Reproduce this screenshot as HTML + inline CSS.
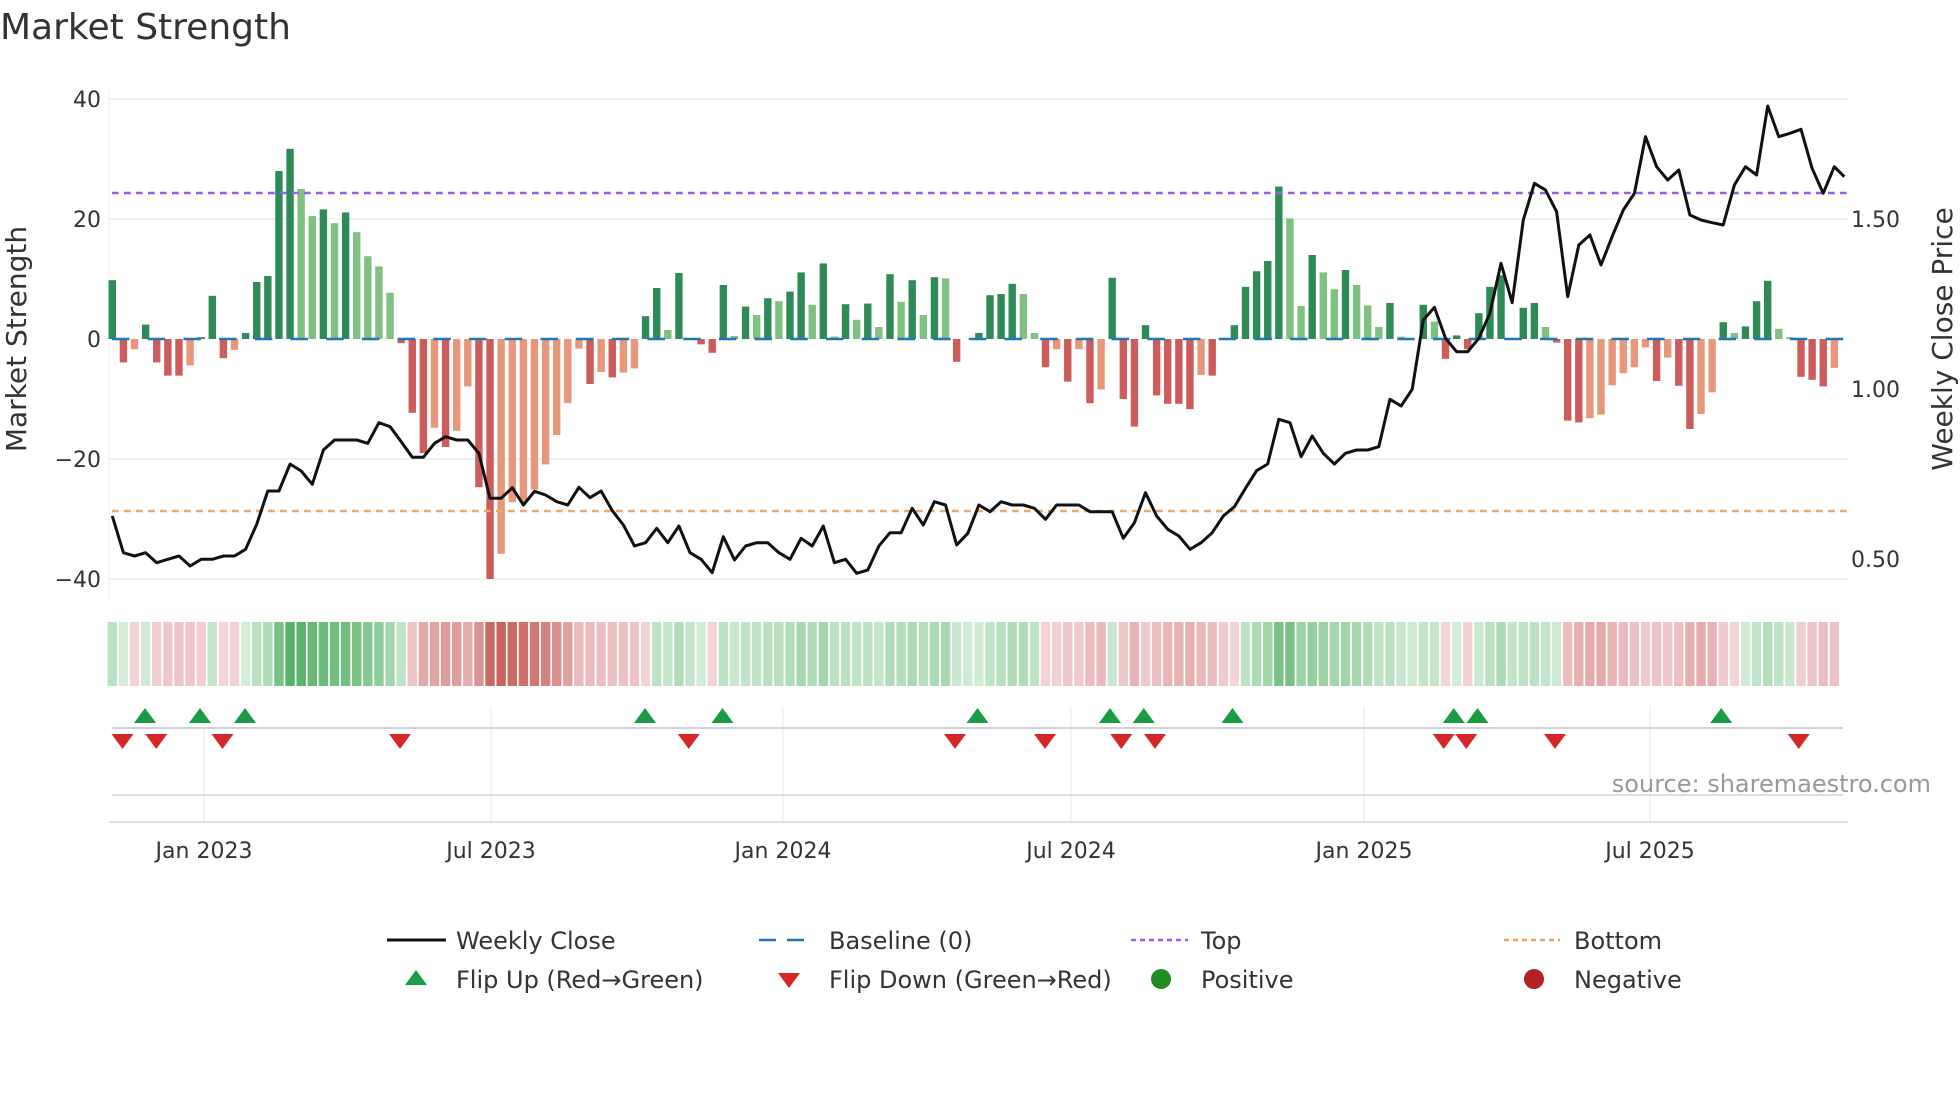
<!DOCTYPE html>
<html><head><meta charset="utf-8"><style>
html,body{margin:0;padding:0;background:#fff;width:1960px;height:1102px;overflow:hidden}
svg text{font-family:"DejaVu Sans","Liberation Sans",sans-serif;fill:#333}
</style></head><body>
<svg id="s" width="1960" height="1102" viewBox="0 0 1960 1102" xmlns="http://www.w3.org/2000/svg">
<text x="0" y="39" font-size="36" fill="#333">Market Strength</text>
<g id="grid"></g>
<g id="bars"></g>
<g id="strip"></g>
<g id="marks"></g>
<g font-size="22" text-anchor="end">
<text x="101" y="107">40</text><text x="101" y="227">20</text><text x="101" y="347">0</text>
<text x="101" y="467">−20</text><text x="101" y="587">−40</text>
</g>
<g font-size="22">
<text x="1851" y="227">1.50</text><text x="1851" y="397">1.00</text><text x="1851" y="567">0.50</text>
</g>
<text font-size="28" text-anchor="middle" transform="translate(26,339) rotate(-90)">Market Strength</text>
<text font-size="28" text-anchor="middle" transform="translate(1952,339) rotate(-90)">Weekly Close Price</text>
<g font-size="22" text-anchor="middle">
<text x="204" y="858">Jan 2023</text><text x="491" y="858">Jul 2023</text><text x="783" y="858">Jan 2024</text>
<text x="1071" y="858">Jul 2024</text><text x="1364" y="858">Jan 2025</text><text x="1650" y="858">Jul 2025</text>
</g>
<text x="1931" y="792" font-size="24" text-anchor="end" style="fill:#999">source: sharemaestro.com</text>
<g font-size="24">
<line x1="387" y1="940" x2="446" y2="940" stroke="#111" stroke-width="3"/>
<text x="456" y="949">Weekly Close</text>
<line x1="759" y1="940" x2="815" y2="940" stroke="#1f77b4" stroke-width="2.5" stroke-dasharray="17,11"/>
<text x="829" y="949">Baseline (0)</text>
<line x1="1131" y1="940" x2="1188" y2="940" stroke="#9b5de5" stroke-width="2.5" stroke-dasharray="5,4"/>
<text x="1201" y="949">Top</text>
<line x1="1504" y1="940" x2="1560" y2="940" stroke="#f0a060" stroke-width="2.5" stroke-dasharray="5,4"/>
<text x="1574" y="949">Bottom</text>
<polygon points="405,985 427,985 416,970" fill="#1a9c45"/>
<text x="456" y="988">Flip Up (Red→Green)</text>
<polygon points="778,973 800,973 789,988" fill="#d62728"/>
<text x="829" y="988">Flip Down (Green→Red)</text>
<circle cx="1161" cy="979" r="10" fill="#228b22"/>
<text x="1201" y="988">Positive</text>
<circle cx="1534" cy="979" r="10" fill="#b22222"/>
<text x="1574" y="988">Negative</text>
</g>
</svg>
<script>
var NS="http://www.w3.org/2000/svg";
function el(p,t,a){var e=document.createElementNS(NS,t);for(var k in a)e.setAttribute(k,a[k]);document.getElementById(p).appendChild(e);return e;}
var V=[9.8,-3.9,-1.7,2.4,-3.9,-6.1,-6.1,-4.4,0.3,7.2,-3.2,-1.8,1,9.5,10.5,28,31.7,25,20.5,21.6,19.3,21.1,17.8,13.8,12.1,7.7,-0.7,-12.3,-19,-14.8,-18,-15.3,-7.9,-24.7,-40,-35.8,-27.2,-27.2,-25.1,-20.9,-16,-10.7,-1.6,-7.5,-5.5,-6.4,-5.6,-4.9,3.8,8.5,1.5,11,0,-0.9,-2.3,9,0.5,5.4,4,6.8,6.3,7.9,11.1,5.7,12.6,0.4,5.8,3.2,5.9,2,10.8,6.2,9.8,4,10.3,10.1,-3.8,0,1,7.3,7.5,9.2,7.5,1,-4.7,-1.7,-7.1,-1.7,-10.7,-8.4,10.2,-10,-14.6,2.3,-9.4,-10.8,-10.8,-11.7,-6,-6.1,0,2.3,8.7,11.3,13,25.4,20.1,5.5,14,11.1,8.3,11.5,9,5.6,2,6,0.4,0,5.7,2.9,-3.3,0.6,-1.7,4.3,8.7,10.6,0.2,5.2,6,2,-0.6,-13.6,-13.9,-13.2,-12.6,-7.7,-5.7,-4.7,-1.4,-7,-3.1,-7.8,-15,-12.5,-8.9,2.8,1,2.1,6.3,9.7,1.7,0.3,-6.3,-6.8,-7.9,-4.8];
var P=[1278,1388,1398,1388,1418,1408,1398,1428,1408,1408,1398,1398,1378,1303,1203,1203,1122,1143,1183,1080,1050,1050,1050,1060,998,1010,1055,1102,1102,1060,1040,1050,1050,1090,1225,1225,1193,1245,1204,1215,1235,
1245,1192,1223,1203,1262,1305,1368,1358,1315,1358,1308,1388,1408,1448,1340,1410,1368,1358,1358,1388,1408,1345,1368,1308,1418,1408,1450,1440,1368,1328,1328,1255,1305,1235,1245,1365,1330,1245,1265,1235,1245,
1245,1255,1288,1245,1245,1245,1265,1265,1265,1345,1298,1208,1278,1318,1338,1378,1358,1328,1278,1250,1195,1142,1122,988,998,1100,1038,1090,1122,1090,1080,1080,1070,928,948,898,690,652,745,785,
785,745,670,520,638,390,280,300,365,620,465,435,525,440,360,310,140,230,270,240,375,390,398,405,285,230,255,48,140,130,118,235,310,230];
var LT={2:1,7:1,11:1,17:1,18:1,20:1,22:1,23:1,24:1,25:1,29:1,31:1,32:1,35:1,36:1,37:1,38:1,39:1,40:1,41:1,42:1,44:1,46:1,47:1,50:1,56:1,58:1,60:1,63:1,65:1,67:1,69:1,71:1,73:1,75:1,82:1,83:1,85:1,87:1,89:1,98:1,106:1,107:1,109:1,110:1,112:1,113:1,114:1,116:1,119:1,126:1,129:1,133:1,134:1,135:1,136:1,137:1,138:1,140:1,143:1,144:1,146:1,150:1,151:1,155:1};
function X(i){return 112.3+i*11.11;}
function Y(v){return 339-v*6.0;}
[99,219,459,579].forEach(function(y){el("grid","line",{x1:109,x2:1848,y1:y,y2:y,stroke:"#eceff3","stroke-width":1.5});});
el("grid","line",{x1:109,x2:109,y1:90,y2:600,stroke:"#eef0f3","stroke-width":1});
for(var i=0;i<V.length;i++){var v=V[i];if(v===0)continue;var lt=LT[i];
 var c=v>0?(lt?"#80c080":"#2e8b57"):(lt?"#e8977a":"#cd5c5c");
 var y0=Y(Math.max(v,0)),h=Math.abs(v)*6.0;
 el("bars","rect",{x:X(i)-3.7,y:y0,width:7.4,height:Math.max(h,1),fill:c});}
el("bars","line",{x1:105,x2:1846,y1:339,y2:339,stroke:"#1f77b4","stroke-width":2.5,"stroke-dasharray":"17.5,18.2","stroke-dashoffset":"-7"});
el("bars","line",{x1:112,x2:1848,y1:193,y2:193,stroke:"#9b5de5","stroke-width":2.5,"stroke-dasharray":"6.7,5.3"});
el("bars","line",{x1:112,x2:1848,y1:511,y2:511,stroke:"#f0a868","stroke-width":2.5,"stroke-dasharray":"6.7,5.3"});
var pts=[];for(var i=0;i<P.length;i++)pts.push(X(i).toFixed(1)+","+(90+P[i]/3).toFixed(1));
pts.push((X(155)+10).toFixed(1)+","+(90+260/3).toFixed(1));
el("bars","polyline",{points:pts.join(" "),fill:"none",stroke:"#111","stroke-width":3,"stroke-linejoin":"round"});
function mix(a,b,t){return "rgb("+[0,1,2].map(function(k){return Math.round(a[k]+(b[k]-a[k])*t);}).join(",")+")";}
var prev=0;
for(var i=0;i<V.length;i++){var s=0.55*V[i]+0.45*prev;prev=s;var c;
 if(s>=0){c=mix([212,237,216],[88,178,104],Math.min(1,s/26));}else{c=mix([244,214,216],[200,100,96],Math.min(1,-s/32));}
 el("strip","rect",{x:X(i)-4.7,y:622,width:9.4,height:64,fill:c});}
[204,491,783,1071,1364,1650].forEach(function(x){el("grid","line",{x1:x,x2:x,y1:706,y2:822,stroke:"#eef0f3","stroke-width":1.5});});
el("marks","line",{x1:112,x2:1843,y1:728,y2:728,stroke:"#cfd3d8","stroke-width":2});
el("marks","line",{x1:112,x2:1843,y1:795,y2:795,stroke:"#cfd3d8","stroke-width":1.5});
el("marks","line",{x1:109,x2:1848,y1:822,y2:822,stroke:"#cfd3d8","stroke-width":1.5});
[116,160,196,516,578,782,888,915,986,1163,1182,1377].forEach(function(x){var c=x*1.25;
 el("marks","polygon",{points:(c-11)+",723 "+(c+11)+",723 "+c+",708",fill:"#1a9c45"});});
[98,125,178,320,551,764,836,897,924,1155,1173,1244,1439].forEach(function(x){var c=x*1.25;
 el("marks","polygon",{points:(c-11)+",734 "+(c+11)+",734 "+c+",749",fill:"#d62728"});});
</script>
</body></html>
